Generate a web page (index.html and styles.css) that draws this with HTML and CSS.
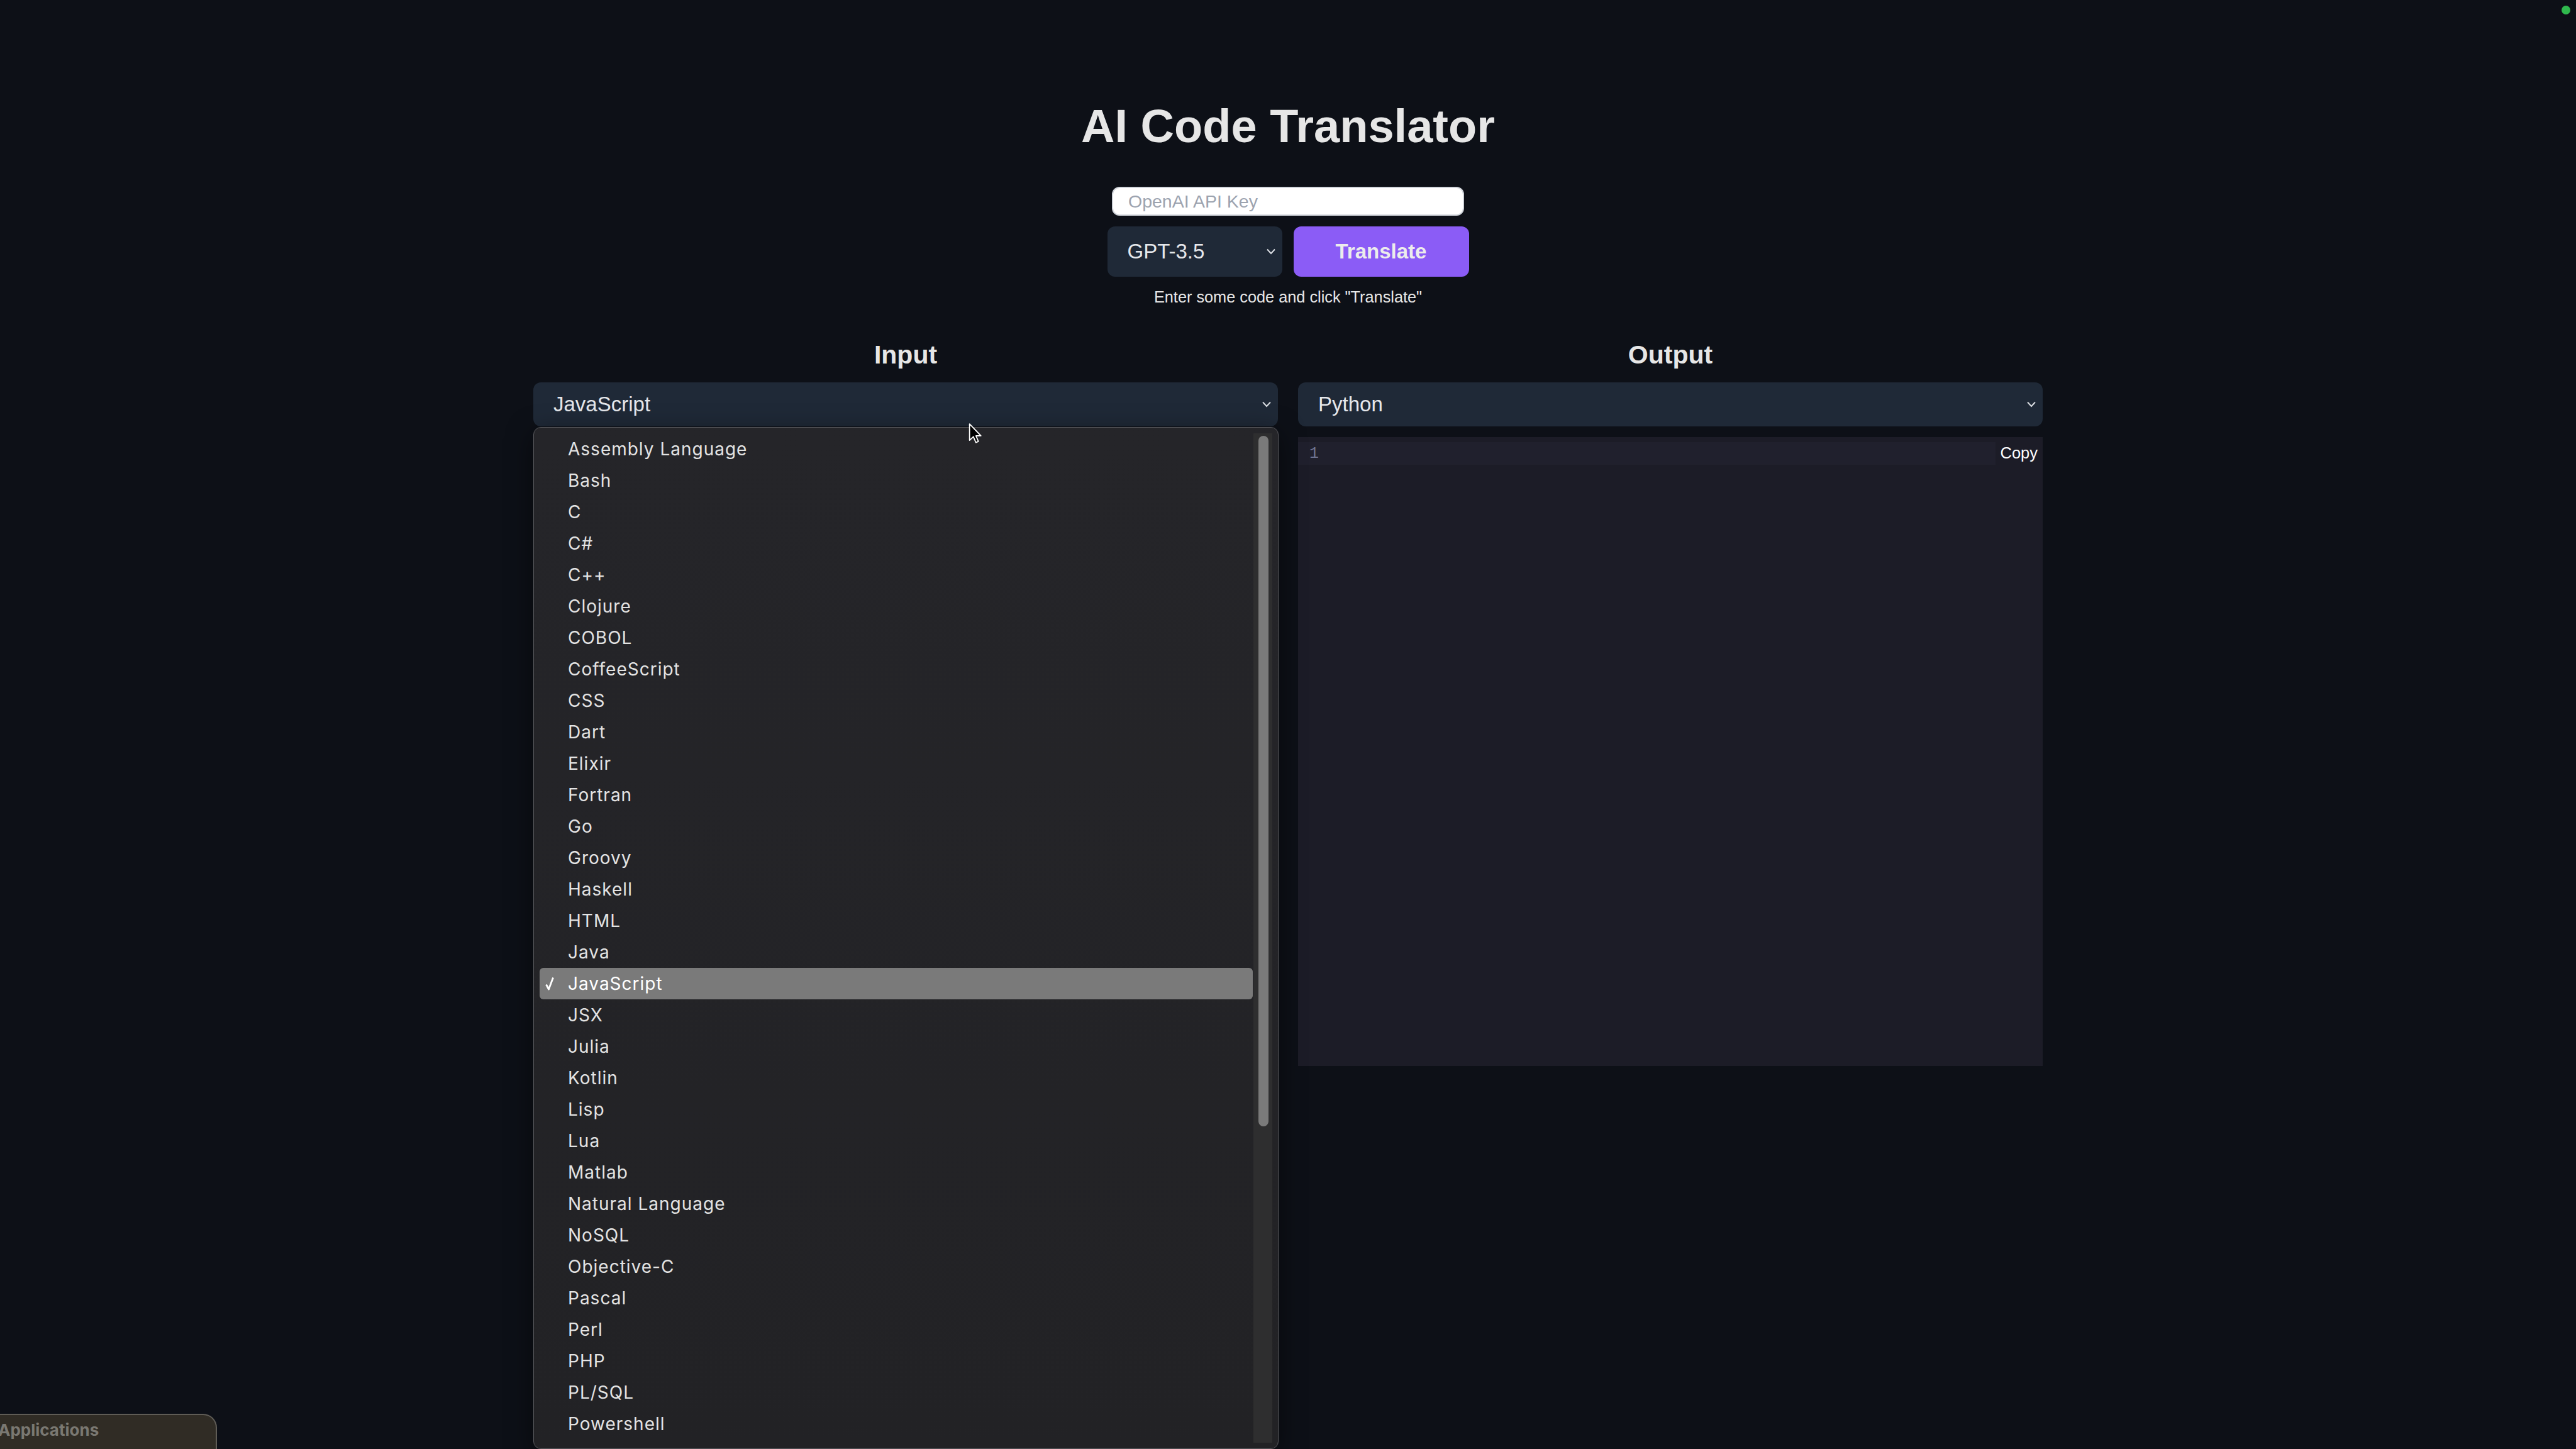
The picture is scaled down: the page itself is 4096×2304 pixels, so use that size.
FILE: index.html
```html
<!DOCTYPE html>
<html lang="en">
<head>
<meta charset="utf-8">
<title>AI Code Translator</title>
<link rel="stylesheet" href="styles.css">
</head>
<body>
<div class="app">
  <h1 class="title">AI Code Translator</h1>
  <input class="key" type="text" placeholder="OpenAI API Key">
  <div class="controls">
    <div class="select model">
      <span>GPT-3.5</span>
      <svg class="chev" viewBox="0 0 16 10" width="16" height="10"><polyline points="2,1.5 8,8 14,1.5" fill="none" stroke="#d8dbe0" stroke-width="2"/></svg>
    </div>
    <button class="translate">Translate</button>
  </div>
  <p class="hint">Enter some code and click "Translate"</p>
  <div class="columns">
    <section class="col">
      <h2 class="heading">Input</h2>
      <div class="select-wrap">
        <div class="select lang">
          <span>JavaScript</span>
          <svg class="chev" viewBox="0 0 16 10" width="16" height="10"><polyline points="2,1.5 8,8 14,1.5" fill="none" stroke="#d8dbe0" stroke-width="2"/></svg>
        </div>
        <div class="menu">
          <ul class="options">
            <li class="opt"><span class="mark"></span>Assembly Language</li>
            <li class="opt"><span class="mark"></span>Bash</li>
            <li class="opt"><span class="mark"></span>C</li>
            <li class="opt"><span class="mark"></span>C#</li>
            <li class="opt"><span class="mark"></span>C++</li>
            <li class="opt"><span class="mark"></span>Clojure</li>
            <li class="opt"><span class="mark"></span>COBOL</li>
            <li class="opt"><span class="mark"></span>CoffeeScript</li>
            <li class="opt"><span class="mark"></span>CSS</li>
            <li class="opt"><span class="mark"></span>Dart</li>
            <li class="opt"><span class="mark"></span>Elixir</li>
            <li class="opt"><span class="mark"></span>Fortran</li>
            <li class="opt"><span class="mark"></span>Go</li>
            <li class="opt"><span class="mark"></span>Groovy</li>
            <li class="opt"><span class="mark"></span>Haskell</li>
            <li class="opt"><span class="mark"></span>HTML</li>
            <li class="opt"><span class="mark"></span>Java</li>
            <li class="opt selected"><span class="mark"><svg viewBox="0 0 14 22" width="14" height="22"><polyline points="1.5,12.5 5.5,20 12.5,1.5" fill="none" stroke="#ffffff" stroke-width="2.8" stroke-linejoin="round"/></svg></span>JavaScript</li>
            <li class="opt"><span class="mark"></span>JSX</li>
            <li class="opt"><span class="mark"></span>Julia</li>
            <li class="opt"><span class="mark"></span>Kotlin</li>
            <li class="opt"><span class="mark"></span>Lisp</li>
            <li class="opt"><span class="mark"></span>Lua</li>
            <li class="opt"><span class="mark"></span>Matlab</li>
            <li class="opt"><span class="mark"></span>Natural Language</li>
            <li class="opt"><span class="mark"></span>NoSQL</li>
            <li class="opt"><span class="mark"></span>Objective-C</li>
            <li class="opt"><span class="mark"></span>Pascal</li>
            <li class="opt"><span class="mark"></span>Perl</li>
            <li class="opt"><span class="mark"></span>PHP</li>
            <li class="opt"><span class="mark"></span>PL/SQL</li>
            <li class="opt"><span class="mark"></span>Powershell</li>
          </ul>
          <div class="track"><div class="thumb"></div></div>
        </div>
      </div>
      <div class="editor"></div>
    </section>
    <section class="col">
      <h2 class="heading">Output</h2>
      <div class="select lang">
        <span>Python</span>
        <svg class="chev" viewBox="0 0 16 10" width="16" height="10"><polyline points="2,1.5 8,8 14,1.5" fill="none" stroke="#d8dbe0" stroke-width="2"/></svg>
      </div>
      <div class="editor">
        <div class="line"><span class="ln">1</span></div>
        <button class="copy">Copy</button>
      </div>
    </section>
  </div>
</div>
<div class="dock">Applications</div>
<span class="dot"></span>
<svg class="cursor" viewBox="0 0 19 30" width="21" height="34"><path d="M1.5,1.5 L1.5,25 L7,19.8 L10.6,28.2 L14.2,26.6 L10.7,18.6 L17.8,18.6 Z" fill="#000" stroke="#fff" stroke-width="1.6" stroke-linejoin="round"/></svg>
</body>
</html>
```
FILE: styles.css
```css
html, body {
  margin: 0;
  height: 100%;
  overflow: hidden;
}
body {
  background: #0d1017;
  color: #e5e5e5;
  font-family: "Liberation Sans", Arial, sans-serif;
  position: relative;
}
.app {
  padding-top: 164px;
  display: flex;
  flex-direction: column;
  align-items: center;
}
.title {
  margin: 0;
  font-size: 74px;
  line-height: 74px;
  font-weight: 700;
  color: #e6e6e6;
}
.key {
  margin-top: 59px;
  width: 560px;
  height: 46px;
  box-sizing: border-box;
  border: 2px solid #d1d5db;
  border-radius: 12px;
  padding: 0 24px;
  background: #ffffff;
  font-family: "Liberation Sans", Arial, sans-serif;
  font-size: 28.5px;
  color: #111;
  outline: none;
}
.key::placeholder {
  color: #9ca3af;
}
.controls {
  margin-top: 17px;
  display: flex;
  gap: 18px;
}
.select {
  box-sizing: border-box;
  background: #1f2937;
  border-radius: 12px;
  display: flex;
  align-items: center;
  justify-content: space-between;
  padding: 0 10px 0 32px;
  font-size: 33px;
  color: #e5e7eb;
}
.model {
  width: 278px;
  height: 80px;
}
.lang {
  height: 70px;
  padding-left: 32px;
}
.chev {
  display: block;
  flex: none;
}
.translate {
  width: 279px;
  height: 80px;
  border: 0;
  border-radius: 12px;
  background: #8b5cf6;
  color: #ececec;
  font-family: "Liberation Sans", Arial, sans-serif;
  font-size: 33px;
  font-weight: 700;
  padding: 0;
}
.hint {
  margin: 20px 0 0;
  font-size: 25.3px;
  line-height: 25px;
  color: #e8e8e8;
}
.columns {
  margin-top: 59px;
  width: 2400px;
  display: grid;
  grid-template-columns: 1fr 1fr;
  gap: 32px;
}
.heading {
  margin: 0 0 23px;
  text-align: center;
  font-size: 41px;
  line-height: 41px;
  font-weight: 700;
  color: #e6e6e6;
}
.select-wrap {
  position: relative;
}
.editor {
  position: relative;
  margin-top: 17px;
  height: 1000px;
  box-sizing: border-box;
  padding-top: 8px;
  background: #1c1c27;
}
.line {
  width: 1109px;
  height: 36px;
  box-sizing: border-box;
  padding-left: 18px;
  display: flex;
  align-items: center;
  background: #20202d;
  font-family: "Liberation Mono", monospace;
  font-size: 25px;
  color: #6e7391;
}
.copy {
  position: absolute;
  top: 0;
  right: 0;
  width: 75px;
  height: 50px;
  border: 0;
  padding: 0 8px 0 0;
  text-align: right;
  background: #1c1c27;
  color: #ffffff;
  font-family: "Liberation Sans", Arial, sans-serif;
  font-size: 25.5px;
}
.menu {
  position: absolute;
  z-index: 5;
  top: 71px;
  left: 0;
  width: calc(100% + 1px);
  height: 1625px;
  box-sizing: border-box;
  display: flex;
  padding: 9px;
  border: 1px solid #58585c;
  border-radius: 12px;
  background: linear-gradient(#252529, #222225);
  box-shadow: 0 10px 40px rgba(0, 0, 0, 0.5);
  overflow: hidden;
}
.options {
  list-style: none;
  margin: 0;
  padding: 0;
  flex: 1;
  overflow: hidden;
}
.opt {
  height: 50px;
  display: flex;
  align-items: center;
  border-radius: 6px;
  font-family: Inter, "Noto Sans", sans-serif;
  font-size: 28px;
  letter-spacing: 1px;
  color: #e3e3e3;
}
.mark {
  width: 45px;
  flex: none;
  box-sizing: border-box;
  padding-left: 9px;
  display: flex;
  align-items: center;
}
.mark svg {
  display: block;
}
.selected {
  background: #7a7a7a;
  color: #ffffff;
}
.track {
  width: 30px;
  margin-left: 1px;
  flex: none;
  background: #2e2e2f;
  box-sizing: border-box;
  padding: 4px 6px 0 8px;
}
.thumb {
  height: 1098px;
  border-radius: 8px;
  background: #7a7a7a;
}
.dock {
  position: absolute;
  left: 0;
  top: 2248px;
  width: 345px;
  height: 80px;
  box-sizing: border-box;
  padding-top: 11px;
  text-indent: -3px;
  background: #302c25;
  border-top: 2px solid #5f5c56;
  border-right: 2px solid #5f5c56;
  border-top-right-radius: 22px;
  font-family: Inter, "Noto Sans", sans-serif;
  font-weight: 700;
  font-size: 26px;
  line-height: 26px;
  color: #7a7872;
}
.dot {
  position: absolute;
  left: 4073px;
  top: 9px;
  width: 14px;
  height: 14px;
  border-radius: 50%;
  background: #2fb84d;
}
.cursor {
  position: absolute;
  left: 1540px;
  top: 672px;
  z-index: 10;
}
```
